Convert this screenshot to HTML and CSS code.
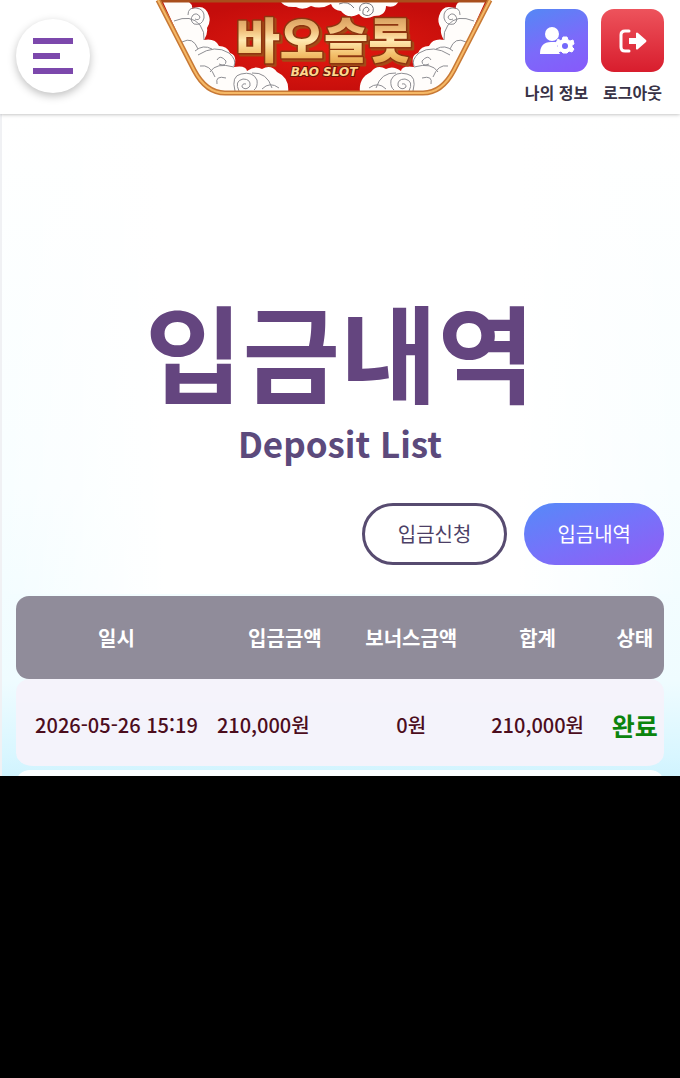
FILE: index.html
```html
<!DOCTYPE html>
<html lang="ko">
<head>
<meta charset="utf-8">
<meta name="viewport" content="width=device-width, initial-scale=1">
<title>입금내역</title>
<link rel="stylesheet" href="styles.css">
</head>
<body>
<div class="screen">
  <header class="header">
    <button class="menu" type="button" aria-label="메뉴">
      <span class="menu-bar"></span>
      <span class="menu-bar menu-bar-short"></span>
      <span class="menu-bar"></span>
    </button>
    <a class="logo" href="#" aria-label="바오슬롯">
      <svg width="338" height="96" viewBox="0 0 338 96">
        <defs>
          <linearGradient id="gold" x1="0" y1="0" x2="0" y2="1">
            <stop offset="0" stop-color="#b97c44"/>
            <stop offset=".4" stop-color="#f0bd78"/>
            <stop offset=".55" stop-color="#ffe9b0"/>
            <stop offset=".75" stop-color="#f3c06c"/>
            <stop offset="1" stop-color="#d98b2c"/>
          </linearGradient>
          <radialGradient id="red">
            <stop offset="0" stop-color="#e31a10"/>
            <stop offset="1" stop-color="#c40d0b"/>
          </radialGradient>
          <clipPath id="plate"><path d="M3 0H335L299 70Q287 93 268 93H70Q51 93 39 70Z"/></clipPath>
          <g id="cloud" fill="#fffdfb">
            <path d="M8 2H34Q38 5 37 9Q50 3 54 16Q56 22 52 28Q53 34 49 40Q60 38 64 46Q72 46 75 53Q83 55 79 67Q91 65 92 71Q100 65 107 69Q116 64 122 72Q135 78 133 93H50Z"/>
            <g fill="none" stroke="#8d8d92" stroke-width="1">
              <path d="M33 15Q33 7 41 8Q50 9 49 18Q47 26 39 24Q34 20 38 15Q42 12 45 17Q44 21 40 19"/>
              <path d="M19 21Q36 14 45 25Q50 32 49 40M27 42Q38 36 43 49M40 51Q48 44 57 49M43 55Q60 44 74 53Q82 60 79 66M62 60Q65 54 71 61Q71 67 64 64M45 66Q55 64 60 77M55 72Q61 62 79 67M62 84Q60 75 71 78M80 91Q76 76 86 74Q98 71 102 80Q103 87 99 90M84 91Q79 81 88 79Q96 79 95 86Q91 91 87 87Q87 83 91 84M97 73Q112 72 117 88M107 89Q115 81 124 88"/>
            </g>
          </g>
        </defs>
        <g clip-path="url(#plate)">
          <rect width="338" height="96" fill="url(#red)"/>
          <use href="#cloud"/>
          <use href="#cloud" transform="translate(338 0) scale(-1 1)"/>
          <path d="M125 0H244Q241 9 231 6Q231 16 219 16Q209 21 204 14Q193 20 186 11Q178 10 176 4Q166 10 156 6Q148 11 141 7Q128 8 125 0Z" fill="#fffdfb"/>
          <path d="M205 11Q203 4 211 3Q220 4 218 12Q214 18 208 14Q207 8 212 7Q216 10 212 12M184 4Q193 0 199 8" fill="none" stroke="#77777d"/>
          <path d="M0 1H338" stroke="#a94e1c" stroke-width="3"/>
        </g>
        <g fill="none">
          <path d="M3 0L39 70Q51 93 70 93H268Q287 93 299 70L335 0" stroke="#c87935" stroke-width="5"/>
          <path d="M3 0L39 70Q51 93 70 93H268Q287 93 299 70L335 0" stroke="#f5b866" stroke-width="2"/>
        </g>
        <text class="logo-name" x="169" y="58" text-anchor="middle" fill="url(#gold)">바오슬롯</text>
        <text class="logo-sub" x="169" y="76" text-anchor="middle" fill="#ffd58c">BAO SLOT</text>
      </svg>
    </a>
    <nav class="actions">
      <a class="action" href="#">
        <span class="tile tile-info">
          <svg width="36" height="30" viewBox="0 0 36 30" fill="#fff">
            <circle cx="13" cy="8" r="7"/>
            <path d="M1 28Q1 16 12 16H16Q18 16 19 17Q17 23 21 28Z"/>
            <g transform="translate(26 19)">
              <path d="M-2-8H2L3-5L5-4L8-5L9-1L7 0V2L9 4L7 7L4 6L2 8H-2L-4 6L-7 7L-9 4L-7 2V0L-9-2L-7-6L-4-4L-3-5Z" stroke="#fff" stroke-linejoin="round"/>
              <circle cy="1" r="3" fill="#7368fb"/>
            </g>
          </svg>
        </span>
        <span class="action-label">나의 정보</span>
      </a>
      <a class="action" href="#">
        <span class="tile tile-logout">
          <svg width="30" height="26" viewBox="0 0 30 26">
            <path d="M11 3H7Q3 3 3 7V19Q3 23 7 23H11" fill="none" stroke="#fff" stroke-width="3" stroke-linecap="round"/>
            <path d="M11 10H18V5Q19 4 20 5L28 12Q29 13 28 14L20 21Q19 22 18 21V16H11Z" fill="#fff"/>
          </svg>
        </span>
        <span class="action-label">로그아웃</span>
      </a>
    </nav>
  </header>

  <main class="content">
    <div class="heading">
      <h1 class="title">입금내역</h1>
      <p class="subtitle">Deposit List</p>
    </div>
    <nav class="tabs">
      <a class="tab" href="#">입금신청</a>
      <a class="tab tab-active" href="#" aria-current="page">입금내역</a>
    </nav>
    <table class="list">
      <colgroup>
        <col class="col-date"><col class="col-amount"><col class="col-bonus"><col class="col-amount"><col class="col-state">
      </colgroup>
      <thead>
        <tr><th scope="col">일시</th><th scope="col">입금금액</th><th scope="col">보너스금액</th><th scope="col">합계</th><th scope="col">상태</th></tr>
      </thead>
      <tbody>
        <tr><td>2026-05-26 15:19</td><td class="amount">210,000원</td><td>0원</td><td>210,000원</td><td class="state">완료</td></tr>
        <tr><td></td><td></td><td></td><td></td><td></td></tr>
      </tbody>
    </table>
  </main>
</div>
</body>
</html>
```
FILE: styles.css
```css
* { box-sizing: border-box; }

body {
  margin: 0;
  background: #000;
  color: #4c3f66;
  font-family: "Noto Sans CJK KR", sans-serif;
}

a { color: inherit; text-decoration: none; }

.screen {
  display: flex;
  flex-direction: column;
  height: 72vh;
  overflow: hidden;
  background: #fff;
}

.header {
  display: flex;
  flex: none;
  align-items: flex-start;
  height: 114px;
  padding: 0 16px;
  background: #fff;
  box-shadow: 0 0 4px rgba(0, 0, 0, .35);
  z-index: 1;
}

.menu {
  display: flex;
  flex: none;
  flex-direction: column;
  justify-content: center;
  gap: 9px;
  width: 74px;
  height: 74px;
  margin-top: 19px;
  padding: 0 17px;
  border: 0;
  border-radius: 50%;
  background: #fff;
  box-shadow: 0 3px 8px rgba(0, 0, 0, .25);
}

.menu-bar { height: 6px; background: #7c48ac; }
.menu-bar-short { width: 27px; }

.logo {
  display: flex;
  flex: 1;
  justify-content: flex-end;
  padding-right: 32px;
}

.logo-name {
  font-size: 48px;
  font-weight: 900;
  stroke: #8d3510;
  stroke-linejoin: round;
  stroke-width: 3px;
  paint-order: stroke;
  filter: drop-shadow(2px 2px 0 #a34a16);
}

.logo-sub {
  font-family: "DejaVu Sans", sans-serif;
  font-size: 12px;
  font-style: italic;
  font-weight: 700;
  stroke: #6c180a;
  stroke-width: 2px;
  paint-order: stroke;
}

.actions { display: flex; gap: 13px; padding-top: 9px; }

.action {
  display: flex;
  flex-direction: column;
  align-items: center;
  gap: 8px;
  width: 63px;
}

.tile {
  display: flex;
  align-items: center;
  justify-content: center;
  width: 63px;
  height: 63px;
  border-radius: 13px;
}

.tile-info { background: linear-gradient(160deg, #5488f5, #7c6afa 55%, #8759fa); }
.tile-logout { background: linear-gradient(#ed535c, #d81d2d); }

.action-label {
  color: #383246;
  font-size: 16px;
  font-weight: 700;
  line-height: 24px;
  white-space: nowrap;
}

.content {
  flex: 1;
  padding: 171px 16px 0 14px;
  border-left: 2px solid #f0f1f4;
  background:
    linear-gradient(90deg, rgba(255, 255, 255, 0), #fff 24%, #fff 76%, rgba(255, 255, 255, 0)) 0 0 / 100% 480px no-repeat,
    linear-gradient(#fff 0, #f8feff 50%, #effcff 76%, #d8f6ff 86%, #aee8f9 100%);
}

.heading { color: #64457f; text-align: center; }

.title {
  margin: 0;
  font-size: 106px;
  font-weight: 700;
  line-height: 128px;
}

.subtitle {
  margin: 0;
  color: #5c4a7c;
  font-size: 35px;
  font-weight: 700;
  line-height: 60px;
}

.tabs {
  display: flex;
  justify-content: flex-end;
  gap: 17px;
  margin-top: 30px;
}

.tab {
  padding: 16px 33px;
  border-radius: 32px;
  font-size: 20px;
  line-height: 30px;
}

.tab:not(.tab-active) {
  padding: 13px 33px;
  border: 3px solid #574b70;
  background: #fff;
}

.tab-active {
  background: linear-gradient(160deg, #558af8, #7672fa 50%, #925cf3);
  color: #fff;
}

.list {
  width: 100%;
  margin-top: 31px;
  border-spacing: 0;
  table-layout: fixed;
  font-size: 20px;
  text-align: center;
  white-space: nowrap;
}

.col-date { width: 31%; }
.col-amount { width: 21%; }
.col-bonus { width: 18%; }
.col-state { width: 9%; }

th {
  height: 83px;
  padding: 0;
  background: #908c9a;
  color: #fff;
  font-weight: 700;
}

td {
  height: 91px;
  padding: 4px 0 0;
  border-bottom: 4px solid transparent;
  background: rgba(245, 243, 251, .96);
  background-clip: padding-box;
  color: #4c0d1d;
  font-weight: 500;
}

tbody tr:nth-child(even) td { background-color: rgba(255, 255, 255, .9); }

th:first-child { border-radius: 13px 0 0 13px; }
th:last-child { border-radius: 0 13px 13px 0; }
td:first-child { border-radius: 13px 0 0 17px; }
td:last-child { border-radius: 0 13px 17px 0; }

.amount { text-align: left; }
.state { color: #0b840d; font-size: 25px; font-weight: 700; }
```
